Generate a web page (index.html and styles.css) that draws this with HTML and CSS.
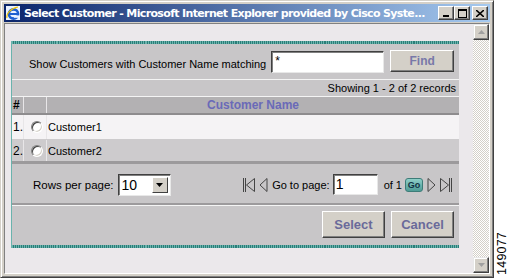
FILE: index.html
```html
<!DOCTYPE html>
<html lang="en">
<head>
  <meta charset="UTF-8" />
  <title>Select Customer</title>
  <link rel="stylesheet" href="styles.css">
</head>
<body>
  <div class="window">
    <div class="titlebar">
      <svg class="ie-icon" width="16" height="16" viewBox="0 0 16 16">
        <rect x="1" y="1" width="14" height="14" fill="#eaf2ff" />
        <circle cx="8.5" cy="9" r="4.6" fill="none" stroke="#1d5fd0" stroke-width="2.6" />
        <rect x="4" y="8" width="9.5" height="2" fill="#1d5fd0" />
        <rect x="9" y="10.4" width="5" height="2.4" fill="#eaf2ff" />
        <path d="M2 13 C1 9 6 3 13 2" fill="none" stroke="#f2c200" stroke-width="1.2" />
      </svg>
      <span class="title">Select Customer - Microsoft Internet Explorer provided by Cisco Syste...</span>
      <div class="caption-btns">
        <span class="cbtn"><svg width="8" height="7" viewBox="0 0 8 7"><rect x="1" y="5" width="6" height="2" fill="#000"/></svg></span>
        <span class="cbtn"><svg width="9" height="9" viewBox="0 0 9 9"><rect x="0.5" y="0.5" width="8" height="8" fill="none" stroke="#000"/><rect x="0" y="0" width="9" height="2" fill="#000"/></svg></span>
        <span class="cbtn close"><svg width="8" height="7" viewBox="0 0 8 7"><path d="M0 0 L8 7 M8 0 L0 7" stroke="#000" stroke-width="1.6"/></svg></span>
      </div>
    </div>
    <div class="client">
      <div class="page">
        <div class="panel">
          <div class="search">
            <span class="search-label">Show Customers with Customer Name matching</span>
            <span class="textbox wide">*</span>
            <span class="btn find">Find</span>
          </div>
          <div class="count">Showing 1 - 2 of 2 records</div>
          <div class="grid">
            <div class="row head">
              <span class="cell num">#</span>
              <span class="cell sel"></span>
              <span class="cell name">Customer Name</span>
            </div>
            <div class="row odd">
              <span class="cell num">1.</span>
              <span class="cell sel"><span class="radio"></span></span>
              <span class="cell">Customer1</span>
            </div>
            <div class="row even">
              <span class="cell num">2.</span>
              <span class="cell sel"><span class="radio"></span></span>
              <span class="cell">Customer2</span>
            </div>
          </div>
          <div class="pager">
            <div class="rows">
              <span>Rows per page:</span>
              <span class="combo"><span class="combo-val">10</span><span class="combo-btn"><svg width="7" height="4" viewBox="0 0 7 4"><path d="M0 0 H7 L3.5 4 Z" fill="#000"/></svg></span></span>
            </div>
            <div class="nav">
              <svg width="14" height="16" viewBox="0 0 14 16"><path d="M1.5 1 V15 M3.5 1 V15 M12.5 1.5 L4.5 8 L12.5 14.5 Z" fill="none" stroke="#444" stroke-width="1"/></svg>
              <svg width="9" height="16" viewBox="0 0 9 16"><path d="M8 1.5 L1 8 L8 14.5 Z" fill="none" stroke="#444" stroke-width="1"/></svg>
              <span class="goto">Go to page:</span>
              <span class="textbox page-no">1</span>
              <span class="of">of 1</span>
              <span class="go">Go</span>
              <svg width="9" height="16" viewBox="0 0 9 16"><path d="M1 1.5 L8 8 L1 14.5 Z" fill="none" stroke="#444" stroke-width="1"/></svg>
              <svg width="14" height="16" viewBox="0 0 14 16"><path d="M1.5 1.5 L9.5 8 L1.5 14.5 Z M10.5 1 V15 M12.5 1 V15" fill="none" stroke="#444" stroke-width="1"/></svg>
            </div>
          </div>
          <div class="actions">
            <span class="btn big">Select</span>
            <span class="btn big">Cancel</span>
          </div>
        </div>
      </div>
      <div class="scrollbar">
        <span class="sbtn"><svg width="7" height="4" viewBox="0 0 7 4"><path d="M3.5 0 L7 4 H0 Z" fill="#a0a0a0"/></svg></span>
        <span class="track"></span>
        <span class="sbtn"><svg width="7" height="4" viewBox="0 0 7 4"><path d="M0 0 H7 L3.5 4 Z" fill="#a0a0a0"/></svg></span>
      </div>
    </div>
  </div>
  <div class="figno"><span>149077</span></div>
</body>
</html>
```

FILE: styles.css
```css
* { box-sizing: border-box; }
body {
  margin: 0;
  width: 509px;
  height: 278px;
  background: #fff;
  display: flex;
  font-family: 'Liberation Sans', Arial, sans-serif;
  font-size: 11px;
  color: #000;
  overflow: hidden;
}
.window {
  width: 494px;
  height: 278px;
  background: #d4d0c8;
  border: 1px solid;
  border-color: #d4d0c8 #404040 #404040 #d4d0c8;
  box-shadow: inset 1px 1px #fff, inset -1px -1px #808080;
  padding: 3px;
  display: flex;
  flex-direction: column;
}
.titlebar {
  height: 18px;
  background: linear-gradient(90deg, #0a246a, #a6caf0);
  display: flex;
  align-items: center;
  padding-left: 1px;
  padding-right: 2px;
}
.ie-icon { flex: none; margin-right: 3px; }
.title {
  color: #fff;
  font-family: 'DejaVu Sans', sans-serif;
  font-weight: bold;
  font-size: 11px;
  letter-spacing: -0.65px;
  white-space: nowrap;
  flex: 1;
}
.caption-btns { display: flex; }
.cbtn {
  width: 16px;
  height: 14px;
  background: #d4d0c8;
  border: 1px solid;
  border-color: #fff #404040 #404040 #fff;
  box-shadow: inset -1px -1px #808080;
  display: flex;
  align-items: center;
  justify-content: center;
}
.cbtn.close { margin-left: 2px; }
.client {
  flex: 1;
  margin-top: 1px;
  display: flex;
  border: 1px solid;
  border-color: #808080 #fff #fff #808080;
  box-shadow: inset 1px 1px #404040;
}
.page {
  flex: 1;
  background: #ebe8eb;
  padding: 17px 0 0 6px;
}
.panel {
  width: 448px;
  background: #c8c6c8;
  border-left: 1px solid #f4f4f4;
  border-top: 3px solid #3a8f8a;
  border-bottom: 3px solid #3a8f8a;
  border-image: repeating-linear-gradient(90deg, #2a7d78 0 1px, #6ab3ad 1px 2px) 3;
}
.search {
  height: 36px;
  border-bottom: 1px solid #f4f4f4;
  display: flex;
  align-items: center;
  padding-left: 17px;
}
.search-label { margin-top: 5px; margin-right: 5px; }
.textbox {
  height: 22px;
  background: #fff;
  border: 1px solid;
  border-color: #404040 #e8e8e8 #e8e8e8 #404040;
  box-shadow: inset 1px 1px #808080;
  padding: 2px 0 0 3px;
  font-size: 13px;
}
.textbox.wide { width: 113px; margin-right: 6px; font-size: 12px; }
.btn {
  background: #d4d0c8;
  border: 1px solid;
  border-color: #fff #404040 #404040 #fff;
  box-shadow: inset -1px -1px #808080;
  color: #7878a8;
  font-weight: bold;
  font-size: 12px;
  display: flex;
  align-items: center;
  justify-content: center;
}
.find { width: 64px; height: 22px; margin-top: -1px; }
.count {
  height: 17px;
  border-bottom: 1px solid #f4f4f4;
  text-align: right;
  padding: 2px 3px 0 0;
}
.row {
  display: grid;
  grid-template-columns: 11px 23px 1fr;
  align-items: stretch;
}
.cell {
  display: flex;
  align-items: center;
  border-left: 1px solid #e8e6e8;
}
.cell:first-child { border-left: none; padding-left: 1px; }
.head {
  height: 18px;
  background: #b3b1b3;
  border-bottom: 2px solid #8e8c8e;
  font-weight: bold;
  font-size: 12px;
}
.head .name {
  justify-content: center;
  color: #6a6ab8;
}
.num { font-size: 12px; }
.odd { height: 24px; background: #f5f3f5; }
.even { height: 25px; background: #cdcbcd; border-bottom: 3px solid #9c9a9c; padding-top: 1px; }
.odd .cell:last-child, .even .cell:last-child { padding-left: 1px; }
.radio {
  display: block;
  width: 12px;
  height: 12px;
  margin-left: 7px;
  border-radius: 50%;
  background: #fff;
  border: 1px solid;
  border-color: #808080 #fff #fff #808080;
  box-shadow: inset 1px 1px #404040, inset -1px -1px #d4d0c8;
}
.pager {
  height: 41px;
  border-bottom: 2px solid #9c9a9c;
  box-shadow: 0 1px #f4f4f4;
  display: flex;
  align-items: center;
  justify-content: space-between;
  padding: 2px 6px 0 21px;
  font-size: 12px;
}
.rows { display: flex; align-items: center; gap: 4px; }
.rows > span:first-child { font-size: 11.5px; }
.combo {
  width: 53px;
  height: 22px;
  display: flex;
  background: #fff;
  border: 1px solid;
  border-color: #404040 #e8e8e8 #e8e8e8 #404040;
  box-shadow: inset 1px 1px #808080;
  padding: 2px;
}
.combo-val { flex: 1; font-size: 14px; padding-left: 1px; line-height: 16px; }
.combo-btn {
  width: 16px;
  background: #d4d0c8;
  border: 1px solid;
  border-color: #fff #404040 #404040 #fff;
  display: flex;
  align-items: center;
  justify-content: center;
}
.nav { display: flex; align-items: center; gap: 3px; }
.goto { margin-left: 1px; font-size: 11px; }
.textbox.page-no { width: 45px; height: 21px; padding: 1px 0 0 2px; font-size: 14px; }
.of { margin: 0 0 0 3px; font-size: 11px; }
.go {
  width: 18px;
  height: 14px;
  border-radius: 3px;
  background: linear-gradient(#8fcfc8, #4e9b95);
  border: 1px solid #3d7c78;
  color: #134;
  font-weight: bold;
  font-size: 9px;
  display: flex;
  align-items: center;
  justify-content: center;
  margin-right: 1px;
}
.actions {
  height: 39px;
  margin-top: 1px;
  display: flex;
  justify-content: flex-end;
  gap: 6px;
  padding: 5px 5px 0 0;
}
.btn.big {
  width: 63px;
  height: 27px;
  color: #6a6a9a;
  font-size: 13px;
}
.scrollbar {
  width: 16px;
  display: flex;
  flex-direction: column;
  background: repeating-conic-gradient(#d4d0c8 0 25%, #fff 0 50%) 0 0 / 2px 2px;
}
.sbtn {
  height: 16px;
  background: #d4d0c8;
  border: 1px solid;
  border-color: #e8e8e8 #404040 #404040 #e8e8e8;
  box-shadow: inset -1px -1px #808080, inset 1px 1px #fff;
  display: flex;
  align-items: center;
  justify-content: center;
}
.track { flex: 1; }
.figno {
  flex: 1;
  display: flex;
  flex-direction: column;
  justify-content: flex-end;
  align-items: center;
  padding-bottom: 3px;
}
.figno span {
  writing-mode: vertical-rl;
  transform: rotate(180deg);
  font-size: 12.5px;
  letter-spacing: 0.2px;
}
```
